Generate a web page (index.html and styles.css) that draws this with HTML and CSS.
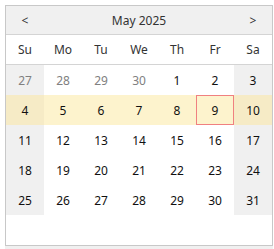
FILE: index.html
```html
<!DOCTYPE html>
<html lang="en">
<head>
    <meta charset="UTF-8">
    <meta name="viewport" content="width=device-width, initial-scale=1.0">
    <title>Calendar</title>
    <link rel="stylesheet" href="styles.css">
</head>
<body>
    <div class="calendar">
        <div class="cal-header">
            <div class="nav">&lt;</div>
            <div class="title">May 2025</div>
            <div class="nav">&gt;</div>
        </div>
        <div class="weekdays">
            <div>Su</div><div>Mo</div><div>Tu</div><div>We</div><div>Th</div><div>Fr</div><div>Sa</div>
        </div>
        <div class="week">
            <div class="day weekend other">27</div>
            <div class="day other">28</div>
            <div class="day other">29</div>
            <div class="day other">30</div>
            <div class="day">1</div>
            <div class="day">2</div>
            <div class="day weekend">3</div>
        </div>
        <div class="week current">
            <div class="day weekend">4</div>
            <div class="day">5</div>
            <div class="day">6</div>
            <div class="day">7</div>
            <div class="day">8</div>
            <div class="day today">9</div>
            <div class="day weekend">10</div>
        </div>
        <div class="week">
            <div class="day weekend">11</div>
            <div class="day">12</div>
            <div class="day">13</div>
            <div class="day">14</div>
            <div class="day">15</div>
            <div class="day">16</div>
            <div class="day weekend">17</div>
        </div>
        <div class="week">
            <div class="day weekend">18</div>
            <div class="day">19</div>
            <div class="day">20</div>
            <div class="day">21</div>
            <div class="day">22</div>
            <div class="day">23</div>
            <div class="day weekend">24</div>
        </div>
        <div class="week">
            <div class="day weekend">25</div>
            <div class="day">26</div>
            <div class="day">27</div>
            <div class="day">28</div>
            <div class="day">29</div>
            <div class="day">30</div>
            <div class="day weekend">31</div>
        </div>
        <div class="week empty"></div>
    </div>
    <div class="strip"></div>
</body>
</html>
```
FILE: styles.css
```css
body {
    font-family: "Noto Sans", "Open Sans", sans-serif;
    font-size: 12px;
    color: #111;
    margin: 0;
    padding: 5px 1px 0 5px;
    background-color: #fff;
}
.calendar {
    width: 268px;
    border: 1px solid #c8c8c8;
    box-sizing: border-box;
}
.cal-header {
    display: flex;
    height: 28px;
    align-items: center;
    background-color: #f0f0f0;
    border-bottom: 1px solid #d4d4d4;
    color: #333;
}
.cal-header .nav {
    width: 38px;
    text-align: center;
}
.cal-header .title {
    flex: 1;
    text-align: center;
}
.weekdays {
    display: grid;
    grid-template-columns: repeat(7, 38px);
    height: 29px;
    align-items: center;
    border-bottom: 1px solid #d4d4d4;
    color: #333;
}
.weekdays div {
    text-align: center;
}
.week {
    display: grid;
    grid-template-columns: repeat(7, 38px);
    height: 30px;
}
.day {
    display: flex;
    align-items: center;
    justify-content: center;
    box-sizing: border-box;
}
.day.weekend {
    background-color: #f0f0f0;
}
.day.other {
    color: #808080;
}
.week.current .day {
    background-color: #fdf3cd;
}
.week.current .day.weekend {
    background-color: #f6ebc6;
}
.day.today {
    border: 1px solid #f08080;
}
.strip {
    height: 4px;
    background-color: #f0f0f0;
}
```
